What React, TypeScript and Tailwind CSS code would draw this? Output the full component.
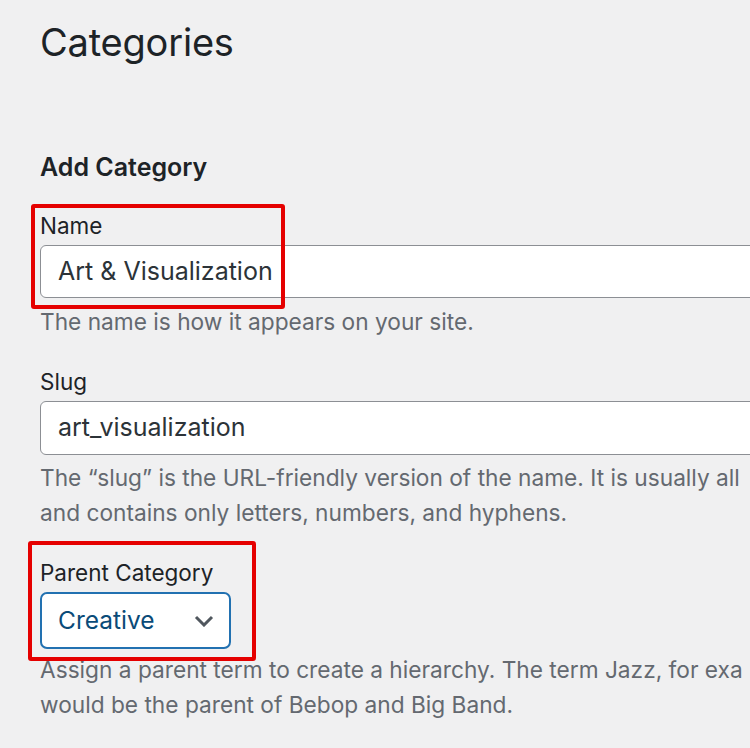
export default function App() {
  return (
    <div
      className="w-[750px] h-[748px] overflow-hidden bg-[#f0f0f1] pl-[40px] text-[#1d2327]"
      style={{ fontFamily: 'Inter, "Noto Sans", sans-serif' }}
    >
      <h1 className="pt-[17px] text-[38px] leading-[50px] font-normal tracking-[-0.2px]">Categories</h1>

      <h2 className="mt-[85px] text-[25px] leading-[30px] font-semibold">Add Category</h2>

      {/* Name */}
      <div className="relative mt-[29px]">
        <label className="block text-[22.5px] leading-[30px]">Name</label>
        <div className="mt-[4px] w-[900px] h-[53px] rounded-[6px] border border-[#8c8f94] bg-white flex items-center pl-[17px] text-[25px] text-[#2c3338]">
          Art &amp; Visualization
        </div>
        <p className="mt-[7px] text-[22.7px] leading-[33px] text-[#646970] whitespace-nowrap">
          The name is how it appears on your site.
        </p>
        <div className="absolute left-[-9px] top-[-7px] w-[254px] h-[105px] border-[4px] border-[#e50000] rounded-[3px]" />
      </div>

      {/* Slug */}
      <div className="mt-[29px]">
        <label className="block text-[22.5px] leading-[30px]">Slug</label>
        <div className="mt-[4px] w-[900px] h-[54px] rounded-[6px] border border-[#8c8f94] bg-white flex items-center pl-[17px] text-[25px] text-[#2c3338]">
          art_visualization
        </div>
        <p className="mt-[5px] text-[22.7px] leading-[35px] text-[#646970] whitespace-nowrap">
          The “slug” is the URL-friendly version of the name. It is usually all
          <br />
          and contains only letters, numbers, and hyphens.
        </p>
      </div>

      {/* Parent */}
      <div className="relative mt-[28px]">
        <label className="block text-[22.5px] leading-[30px]">Parent Category</label>
        <div className="mt-[4px] w-[191px] h-[57px] rounded-[7px] border-[2px] border-[#2271b1] bg-white flex items-center justify-between pl-[16px] pr-[15px] text-[24.5px] text-[#0a4b78]">
          <span>Creative</span>
          <svg width="20" height="12" viewBox="0 0 20 12" fill="none">
            <path d="M2 2l8 8 8-8" stroke="#50575e" strokeWidth="3" />
          </svg>
        </div>
        <p className="mt-[3px] text-[22.7px] leading-[35px] text-[#646970] whitespace-nowrap">
          Assign a parent term to create a hierarchy. The term Jazz, for exa
          <br />
          would be the parent of Bebop and Big Band.
        </p>
        <div className="absolute left-[-12px] top-[-17px] w-[228px] h-[120px] border-[4px] border-[#e50000] rounded-[3px]" />
      </div>
    </div>
  )
}
